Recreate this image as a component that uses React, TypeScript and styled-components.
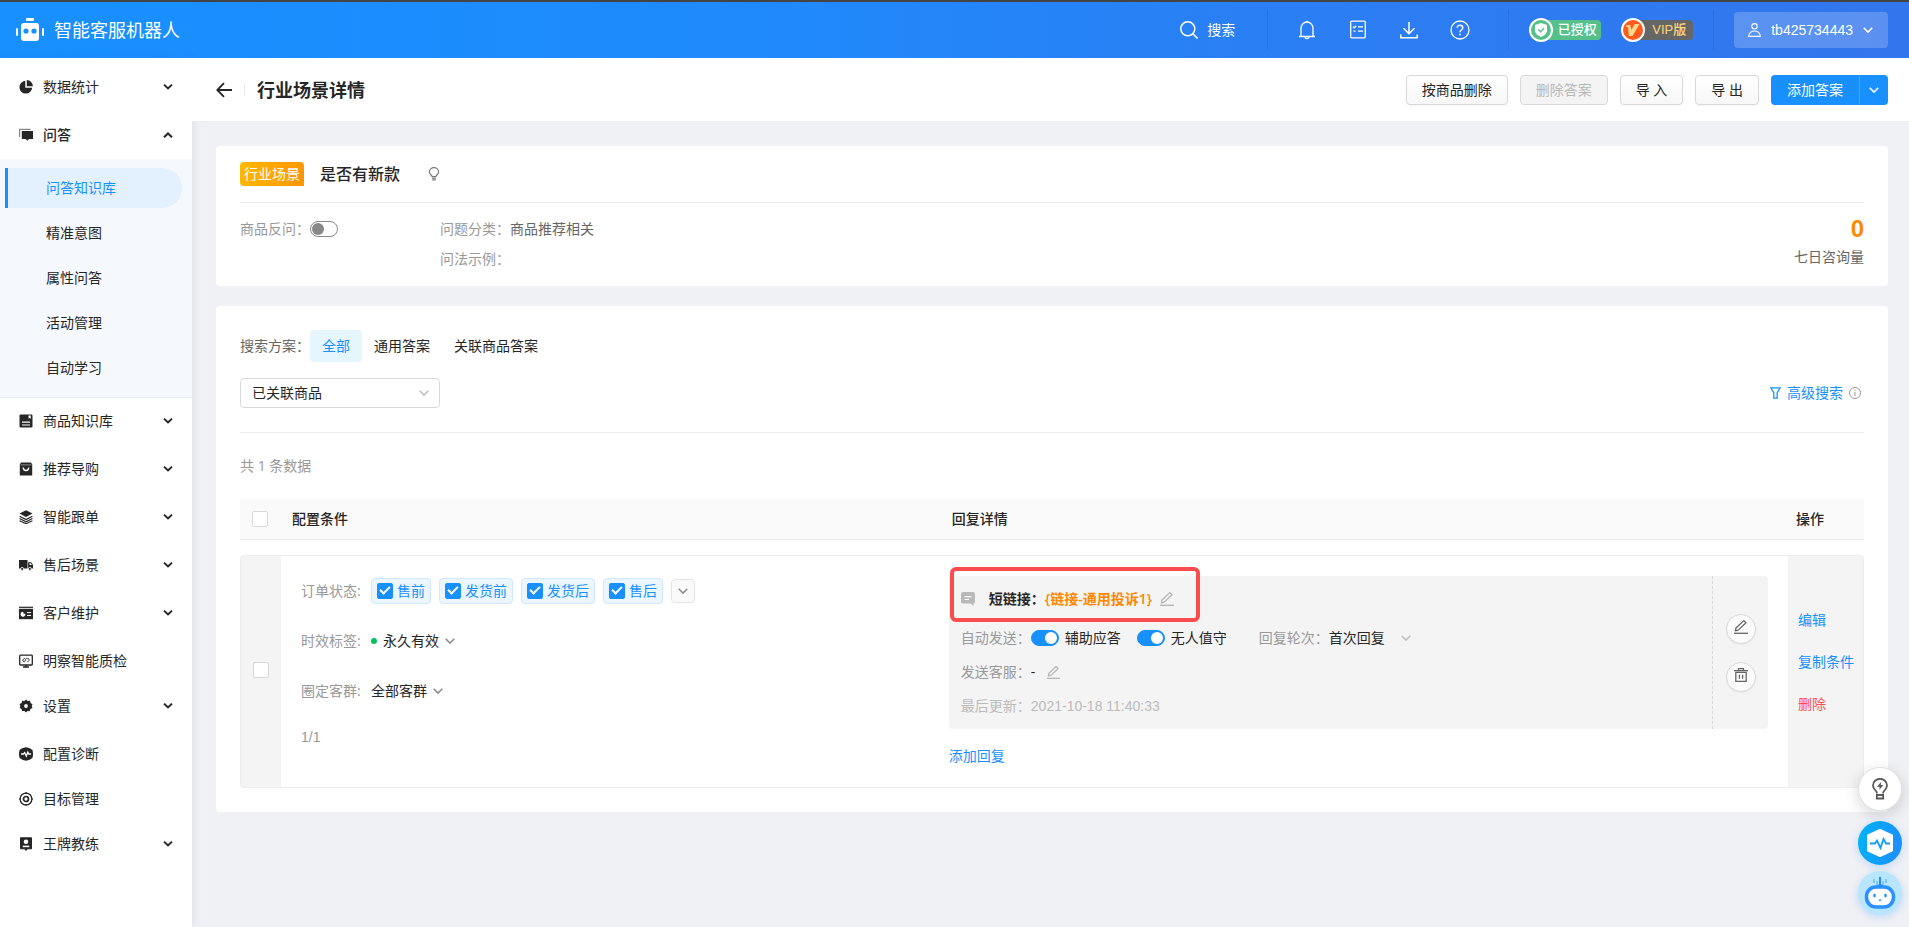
import React from "react";
import styled, { createGlobalStyle, css } from "styled-components";

const blue = "#1890ff";
const ui = '"Open Sans", "Noto Sans CJK SC", sans-serif';
const arial = '"Liberation Sans", "Noto Sans CJK SC", sans-serif';

const Global = createGlobalStyle`
  *, *::before, *::after { box-sizing: border-box; }
  body { margin: 0; background: #f0f1f5; color: #262626; font: 14px/22px ${ui}; }
  button, select, input { font: inherit; color: inherit; margin: 0; }
  button { cursor: pointer; }
  a { text-decoration: none; color: inherit; }
  ul, h1, h2, p { margin: 0; padding: 0; list-style: none; }
  svg { display: block; flex: none; }
`;

/* ---------- shell ---------- */
const Page = styled.div`
  display: flex;
  flex-direction: column;
  min-height: 100vh;
`;
const TopBar = styled.header`
  display: flex;
  align-items: center;
  height: 58px;
  padding: 0 21px 0 16px;
  border-top: 2px solid #444;
  color: #fff;
  background: linear-gradient(90deg, #1890ff 0%, #1f8afc 40%, #2a7ff4 65%, #3375ed 100%);
`;
const Brand = styled.a`
  display: flex;
  align-items: center;
  gap: 10px;
  margin-right: auto;
  font-size: 18px;
`;
const SearchButton = styled.button`
  display: flex;
  align-items: center;
  gap: 9px;
  padding: 0;
  margin-right: 32px;
  border: 0;
  background: none;
`;
const BarLine = styled.span`
  width: 1px;
  height: 40px;
  background: rgba(0, 40, 120, 0.12);
`;
const IconGroup = styled.nav`
  display: flex;
  gap: 31px;
  padding: 0 38px 0 29px;
`;
const BareButton = styled.button`
  display: flex;
  padding: 0;
  border: 0;
  background: none;
`;
const Badges = styled.div`
  display: flex;
  gap: 20px;
  padding: 0 20px;
`;
const Badge = styled.span`
  display: flex;
  align-items: center;
`;
const BadgeDisc = styled.span<{ $bg: string }>`
  position: relative;
  display: flex;
  align-items: center;
  justify-content: center;
  width: 24px;
  height: 24px;
  margin-right: -12px;
  border: 2px solid #fff;
  border-radius: 50%;
  background: ${(p) => p.$bg};
`;
const BadgeText = styled.span<{ $bg: string; $fg: string }>`
  width: 60px;
  height: 20px;
  padding-left: 12px;
  border-radius: 4px;
  text-align: center;
  font-family: ${arial};
  font-size: 13px;
  font-weight: 500;
  line-height: 20px;
  color: ${(p) => p.$fg};
  background: ${(p) => p.$bg};
`;
const UserButton = styled.button`
  display: flex;
  align-items: center;
  height: 36px;
  margin-left: 20px;
  padding: 0 15px 0 14px;
  border: 0;
  border-radius: 4px;
  background: rgba(255, 255, 255, 0.2);
  font-family: ${arial};

  span { margin: 0 10px; }
`;
const Body = styled.div`
  display: flex;
  flex: 1;
`;

/* ---------- side menu ---------- */
const Side = styled.nav`
  flex: none;
  width: 192px;
  padding-top: 9px;
  background: #fff;
  box-shadow: 2px 0 8px rgba(40, 60, 90, 0.08);
`;
const MenuLink = styled.a<{ $strong?: boolean }>`
  display: flex;
  align-items: center;
  gap: 10px;
  height: 40px;
  padding: 0 19px;
  font-weight: ${(p) => (p.$strong ? 500 : 400)};

  svg:nth-of-type(2) { margin-left: auto; }
`;
const MenuItem = styled.li<{ $group?: boolean }>`
  margin-bottom: ${(p) => (p.$group ? 8 : 5)}px;
`;
const SubMenu = styled.ul`
  display: flex;
  flex-direction: column;
  gap: 5px;
  margin: 4px 0 -5px;
  padding: 9px 10px 9px 5px;
  border-bottom: 1px solid #e3eefa;
  background: #f5f9fd;
`;
const SubLink = styled.a<{ $active?: boolean }>`
  display: block;
  padding-left: 38px;
  border-left: 3px solid transparent;
  border-radius: 0 20px 20px 0;
  line-height: 40px;
  ${(p) => p.$active && css`
    color: ${blue};
    border-color: ${blue};
    background: #e3f0fe;
  `}
`;

/* ---------- content ---------- */
const Content = styled.div`
  flex: 1;
  min-width: 0;
`;
const TitleBar = styled.div`
  display: flex;
  align-items: center;
  height: 63px;
  padding: 0 21px 0 24px;
  background: #fff;
`;
const Title = styled.h1`
  margin-left: 12px;
  font-size: 18px;
  font-weight: 600;
`;
const TitleLine = styled.span`
  width: 1px;
  height: 12px;
  margin-left: 12px;
  background: #e8e8e8;
`;
const Actions = styled.div`
  display: flex;
  gap: 12px;
  margin-left: auto;
`;
const Button = styled.button`
  height: 30px;
  padding: 0 15px;
  border: 1px solid #d9d9d9;
  border-radius: 4px;
  background: linear-gradient(#fff, #f7f7f7);
  box-shadow: 0 1px 2px rgba(0, 0, 0, 0.04);
  line-height: 28px;

  &:disabled { color: #b8b8b8; background: #f4f4f4; box-shadow: none; }
`;
const SplitButton = styled.div`
  display: flex;
  overflow: hidden;
  border-radius: 4px;
  color: #fff;
  background: ${blue};

  button {
    height: 30px;
    padding: 0 16px;
    border: 0;
    background: none;
  }
  button + button {
    padding: 0 9px;
    border-left: 1px solid #46a6ff;
  }
`;
const Main = styled.main`
  display: flex;
  flex-direction: column;
  gap: 20px;
  padding: 25px 21px 40px 24px;
`;
const Card = styled.section<{ $pad: string }>`
  padding: ${(p) => p.$pad};
  border-radius: 4px;
  background: #fff;
`;
const SceneHead = styled.div`
  display: flex;
  align-items: center;
  gap: 16px;
  padding-bottom: 16px;
  border-bottom: 1px solid #eee;
`;
const SceneTag = styled.span`
  padding: 0 4px;
  border-radius: 4px 4px 0 4px;
  color: #fff;
  line-height: 24px;
  background: linear-gradient(90deg, #ffb800, #ff9600);
`;
const SceneName = styled.h2`
  margin-right: 12px;
  font-size: 16px;
  font-weight: 500;
  line-height: 24px;
`;
const SceneBody = styled.div`
  display: flex;
`;
const Fields = styled.div<{ $w?: number }>`
  display: flex;
  flex-direction: column;
  gap: 8px;
  padding-top: 15px;
  ${(p) => p.$w && `width: ${p.$w}px;`}
`;
const Field = styled.div`
  display: flex;
  align-items: center;
  color: #666;
`;
const Muted = styled.span`
  color: #999;
`;
const MutedLabel = styled.label`
  color: #999;
`;
const Stat = styled.div`
  display: flex;
  flex-direction: column;
  gap: 3px;
  margin-left: auto;
  padding-top: 12px;
  text-align: right;
  color: #666;

  strong { font-family: ${arial}; font-size: 24px; line-height: 28px; color: #ff8800; }
`;
const Switch = styled.input.attrs({ type: "checkbox", role: "switch" })`
  appearance: none;
  display: flex;
  align-items: center;
  width: 28px;
  height: 16px;
  padding: 0 1px;
  border: 1px solid #888;
  border-radius: 8px;
  background: #fff;

  &::before {
    content: "";
    width: 12px;
    height: 12px;
    border-radius: 50%;
    background: #888;
  }
  &:checked { justify-content: flex-end; border-color: ${blue}; background: ${blue}; }
  &:checked::before { background: #fff; }
`;
const Plan = styled.div`
  display: flex;
  align-items: center;
  color: #666;
`;
const PlanTab = styled.button<{ $active?: boolean }>`
  height: 32px;
  padding: 0 12px;
  border: 0;
  border-radius: 4px;
  color: ${(p) => (p.$active ? blue : "#262626")};
  background: ${(p) => (p.$active ? "#e6f6ff" : "none")};
`;
const FilterRow = styled.div`
  display: flex;
  align-items: center;
  justify-content: space-between;
  padding: 16px 0 24px;
  border-bottom: 1px solid #eee;
`;
const Picker = styled.span`
  position: relative;
  display: inline-flex;
  align-items: center;

  svg { position: absolute; right: 0; pointer-events: none; }
`;
const BoxPicker = styled(Picker)`
  width: 200px;
  svg { right: 11px; }
`;
const BoxSelect = styled.select`
  appearance: none;
  width: 100%;
  height: 30px;
  padding: 0 11px;
  border: 1px solid #d9d9d9;
  border-radius: 4px;
  background: #fff;
`;
const PlainSelect = styled.select<{ $room: number }>`
  appearance: none;
  padding: 0 ${(p) => p.$room}px 0 0;
  border: 0;
  background: none;
`;
const Advanced = styled.div`
  display: flex;
  align-items: center;
  gap: 6px;
  padding-right: 3px;
`;
const Link = styled.a<{ $danger?: boolean }>`
  display: inline-flex;
  align-items: center;
  gap: 6px;
  color: ${(p) => (p.$danger ? "#ff4d4f" : blue)};
`;
const Count = styled.p`
  padding: 22px 0;
  color: #999;
`;

/* ---------- answers table ---------- */
const Table = styled.table`
  width: 100%;
  table-layout: fixed;
  border-spacing: 0;

  th {
    height: 41px;
    padding: 0;
    border-bottom: 1px solid #eee;
    background: #fafafa;
    text-align: left;
    font-weight: 500;
  }
  th:nth-child(1) { padding-left: 12px; }
  th:nth-child(2) { padding-left: 11px; }
  th:nth-child(3) { padding-left: 5px; }
  th:nth-child(4) { padding-left: 8px; }

  tbody::before { content: ""; display: block; height: 15px; }
  td { padding: 0; border: solid #eee; border-width: 1px 0; vertical-align: top; }
`;
const CheckCell = styled.td`
  && {
    padding: 0 0 4px 12px;
    border-left-width: 1px;
    border-radius: 4px 0 0 4px;
    background: #f4f4f4;
    vertical-align: middle;
  }
`;
const ConditionCell = styled.td`
  && { padding: 22px 0 0 20px; }
`;
const ReplyCell = styled.td`
  && { padding: 20px 20px 20px 2px; }
`;
const OpsCell = styled.td`
  && {
    border-right-width: 1px;
    border-radius: 0 4px 4px 0;
    background: #f4f4f4;
    vertical-align: middle;
  }
`;
const Ops = styled.div`
  display: flex;
  flex-direction: column;
  align-items: flex-start;
  gap: 20px;
  padding: 0 0 20px 10px;
`;
const Check = styled.input.attrs({ type: "checkbox" })`
  appearance: none;
  display: flex;
  justify-content: center;
  flex: none;
  width: 16px;
  height: 16px;
  border: 1px solid #d9d9d9;
  border-radius: 2px;
  background: #fff;

  &:checked { border-color: ${blue}; background: ${blue}; }
  &:checked::before {
    content: "";
    width: 6px;
    height: 10px;
    border: solid #fff;
    border-width: 0 2px 2px 0;
    transform: rotate(45deg);
  }
`;
const Condition = styled.div`
  display: flex;
  align-items: center;
  height: 26px;
  margin-bottom: 24px;
`;
const ConditionLabel = styled.label`
  width: 70px;
  color: #999;
`;
const Tags = styled.div`
  display: flex;
  align-items: center;
  gap: 8px;
`;
const StateTag = styled.label`
  display: flex;
  align-items: center;
  gap: 4px;
  height: 26px;
  padding: 0 5px;
  border: 1px solid #d0e8ff;
  border-radius: 4px;
  color: ${blue};
  background: #ebf6ff;
`;
const MoreButton = styled.button`
  display: flex;
  align-items: center;
  justify-content: center;
  width: 24px;
  height: 24px;
  padding: 0;
  border: 1px solid #e4e4e4;
  border-radius: 4px;
  background: #fafafa;
`;
const Dot = styled.span`
  width: 6px;
  height: 6px;
  margin-right: 6px;
  border-radius: 50%;
  background: #07c160;
`;
const PageNo = styled.p`
  font-family: ${arial};
  line-height: 18px;
  color: #999;
`;
const ReplyCard = styled.div`
  position: relative;
  display: flex;
  margin-bottom: 16px;
  border-radius: 4px;
  background: #f4f4f4;
`;
const ReplyMain = styled.div`
  flex: 1;
  padding: 0 12px 6px;
`;
const ReplySide = styled.div`
  display: flex;
  flex-direction: column;
  align-items: center;
  justify-content: center;
  gap: 18px;
  width: 56px;
  border-left: 1px dashed #d9d9d9;
`;
const ReplyRow = styled.div<{ $head?: boolean }>`
  display: flex;
  align-items: center;
  height: ${(p) => (p.$head ? 45 : 34)}px;

  strong { margin: 0 8px 0 14px; font-weight: 600; }
  strong em { font-style: normal; color: #ff8800; }
`;
const SwitchLabel = styled.label`
  display: flex;
  align-items: center;
  gap: 6px;
  margin-right: 16px;
`;
const RoundLabel = styled.label`
  margin-left: 16px;
  color: #999;
`;
const Dash = styled.span`
  margin-right: 12px;
`;
const Updated = styled.span`
  color: #bbb;
  font-family: ${arial};
`;
const Highlight = styled.div`
  position: absolute;
  top: -9px;
  left: 1px;
  width: 250px;
  height: 55px;
  border: 4px solid #f94d4d;
  border-radius: 6px;
  pointer-events: none;
`;
const RoundButton = styled.button`
  display: flex;
  align-items: center;
  justify-content: center;
  width: 30px;
  height: 30px;
  padding: 0 0 3px;
  border: 1px solid #d9d9d9;
  border-radius: 50%;
  background: #fbfbfb;
  box-shadow: 0 1px 2px rgba(0, 0, 0, 0.06);
`;
const Floats = styled.aside`
  position: fixed;
  right: 7px;
  bottom: 12px;
  display: flex;
  flex-direction: column;
  align-items: center;
  gap: 6px;
`;
const FloatButton = styled.button<{ $bg: string; $tip?: boolean }>`
  display: flex;
  align-items: center;
  justify-content: center;
  width: 44px;
  height: 44px;
  margin-bottom: ${(p) => (p.$tip ? 4 : 0)}px;
  padding: 0;
  border: ${(p) => (p.$tip ? "1px solid #e0e0e0" : "0")};
  border-radius: 50%;
  background: ${(p) => p.$bg};
  box-shadow: ${(p) => (p.$tip ? "0 4px 16px rgba(0,0,0,.16)" : "0 2px 8px rgba(24,144,255,.25)")};
`;

/* ---------- icons ---------- */
const Chevron = ({ color = "#8c8c8c", w = 1.5 }: { color?: string; w?: number }) => (
  <svg width="10" height="10" viewBox="0 0 10 10" fill="none" stroke={color} strokeWidth={w}>
    <path d="M.7 2.8 5 7.1l4.3-4.3" />
  </svg>
);
const MenuChevron = ({ up }: { up?: boolean }) => (
  <svg width="10" height="10" viewBox="0 0 10 10" fill="none" stroke="#262626" strokeWidth="2">
    <path d={up ? "M1 7.2 5 3.4l4 3.8" : "M1 2.6l4 3.8 4-3.8"} />
  </svg>
);
const Pen = ({ color = "#b4b4b4", size = 14 }: { color?: string; size?: number }) => (
  <svg width={size} height={size} viewBox="0 0 14 14" fill="none" stroke={color} strokeWidth="1.3" strokeLinejoin="round">
    <path d="M1.4 10.8 2 8l7.800-7.400 2.200 2.100L4.200 10.100Z" />
    <path d="M0 13.300h14" />
  </svg>
);
const HeadIcon = ({ children }: { children: React.ReactNode }) => (
  <svg width="20" height="20" viewBox="0 0 20 20" fill="none" stroke="#fff" strokeWidth="1.3">{children}</svg>
);
const D = "#262626";
const menuIcons: Record<string, React.ReactNode> = {
  pie: (<><path d="M6.3.8a6.4 6.4 0 1 0 6.9 7H6.3Z" fill={D} /><path d="M7.8 0a6.3 6.3 0 0 1 6.1 6.3H7.8Z" fill={D} /></>),
  chat: (<><path d="M.6 9V1.4h11" stroke="#888" strokeWidth="1.2" fill="none" /><path d="M2.8 3h11.2v8H10l-1.7 1.7L6.7 11H2.8Z" fill={D} /></>),
  book: (<><rect x=".5" y=".5" width="13" height="13" rx="1.2" fill={D} /><path d="M3 8.2h8M3 11h8" stroke="#fff" strokeWidth="1.2" /><path d="M9.500 1.500h2.300v3.300l-1.150-.8-1.150.8Z" fill="#fff" /></>),
  bag: (<><path d="M2 .4h10l1.200 2.200v11H.8v-11Z" fill={D} /><path d="M1.500 2.900h11" stroke="#aaa" strokeWidth=".8" /><path d="M4.300 5.500c0 4 5.400 4 5.400 0" stroke="#fff" strokeWidth="1.4" fill="none" /></>),
  layers: (<><path d="M7 .3 13.500 3.600 7 6.900.5 3.600Z" fill={D} /><path d="M.6 6.200 7 9.500l6.400-3.300M.6 8.500 7 11.800l6.400-3.300M.6 10.700 7 13.700l6.400-3" stroke={D} strokeWidth="1.2" fill="none" /></>),
  truck: (<><path d="M0 2h8.500v8.500H0Z" fill={D} /><path d="M9.100 4.200h3L14 7v3.500H9.100Z" fill={D} /><path d="M10.500 5.300h1.300l1 1.700h-2.300Z" fill="#fff" /><circle cx="3.200" cy="10.900" r="1.500" fill={D} stroke="#fff" strokeWidth=".8" /><circle cx="10.900" cy="10.900" r="1.500" fill={D} stroke="#fff" strokeWidth=".8" /></>),
  card: (<><path d="M0 1.300h14" stroke={D} strokeWidth="1.2" /><rect y="2.800" width="14" height="10.400" fill={D} /><path d="M2 8.500a2 2 0 0 1 2-2.300v2h2a2 2 0 0 1-4 .3ZM8 6.600h4M8 9.500h4" stroke="#fff" fill="#fff" strokeWidth="1" /></>),
  monitor: (<><rect x=".7" y="1.2" width="12.6" height="9.8" rx=".8" stroke={D} strokeWidth="1.3" fill="none" /><path d="M4 13h6M7 11v2" stroke={D} strokeWidth="1.5" /><path d="M5.700 4 4 5.800c-.6 2.400 2 2.400 2.200 1C6.400 5 7 4 8.200 4.500M8.300 8.200 10 6.400c.4-1.600-.7-2.300-1.600-1.700" stroke={D} fill="none" /></>),
  gear: (<><path d="M7 .5l1.700 1.600 2.300-.3.600 2.200 1.900 1.300L12.700 7l.8 2-2.100 1.100-.8 2.100-2.200-.2L7 13.500 5.500 12l-2.300.1-.7-2.100L.7 9l.6-2-.7-2 2-1.100.6-2.100 2.200.3Z" fill={D} /><circle cx="7" cy="7" r="1.900" fill="#fff" /></>),
  pulse: (<><path d="M7 .2c3 .5 6 1.900 6.600 3.200.5 2 .5 5.200 0 7.200C13 11.900 9.500 13.500 7 13.800 4.500 13.500 1 11.900.4 10.600-.1 8.600-.1 5.400.4 3.400 1 2.100 4 .7 7 .2Z" fill={D} /><path d="M2 7h2.400l1.300-1.300L7.300 9l1.500-4 1 2H12" stroke="#fff" strokeWidth="1.3" fill="none" /></>),
  target: (<g stroke={D} fill="none"><circle cx="7" cy="7" r="5.900" strokeWidth="1.3" /><circle cx="7" cy="7" r="2.500" strokeWidth="1.7" /><path d="M7 0v2M7 12v2M0 7h2M12 7h2" strokeWidth="1.2" /></g>),
  coach: (<><path d="M1.500.8h11v11H8.400L7 13.500 5.600 11.800H1.500Z" fill={D} stroke={D} strokeLinejoin="round" /><circle cx="7" cy="4.800" r="2.300" fill="#fff" /><path d="M3.700 9.400h6.600" stroke="#fff" strokeWidth="1.5" /></>),
};
const MenuIcon = ({ name }: { name: string }) => (
  <svg width="14" height="14" viewBox="0 0 14 14">{menuIcons[name]}</svg>
);

/* ---------- data ---------- */
type Entry = { icon: string; label: string; group?: boolean; children?: string[] };
const menu: Entry[] = [
  { icon: "pie", label: "数据统计", group: true },
  { icon: "chat", label: "问答", group: true, children: ["问答知识库", "精准意图", "属性问答", "活动管理", "自动学习"] },
  { icon: "book", label: "商品知识库", group: true },
  { icon: "bag", label: "推荐导购", group: true },
  { icon: "layers", label: "智能跟单", group: true },
  { icon: "truck", label: "售后场景", group: true },
  { icon: "card", label: "客户维护", group: true },
  { icon: "monitor", label: "明察智能质检" },
  { icon: "gear", label: "设置", group: true },
  { icon: "pulse", label: "配置诊断" },
  { icon: "target", label: "目标管理" },
  { icon: "coach", label: "王牌教练", group: true },
];

const Header = () => (
  <TopBar>
    <Brand href="#">
      <svg width="28" height="24" viewBox="0 0 28 24">
        <g fill="#fff">
          <rect x="10" width="8" height="3" rx="1" />
          <rect x="5" y="5" width="18" height="18" rx="3" />
          <rect y="10" width="2" height="8" rx="1" />
          <rect x="26" y="10" width="2" height="8" rx="1" />
        </g>
        <circle cx="10" cy="13" r="2.600" fill={blue} />
        <circle cx="18" cy="13" r="2.600" fill={blue} />
      </svg>
      智能客服机器人
    </Brand>
    <SearchButton>
      <svg width="18" height="18" viewBox="0 0 18 18" fill="none" stroke="#fff" strokeWidth="1.5">
        <circle cx="7.800" cy="7.800" r="7" /><path d="m12.800 12.800 4.800 4.700" />
      </svg>
      搜索
    </SearchButton>
    <BarLine />
    <IconGroup>
      <BareButton aria-label="通知">
        <HeadIcon><path d="M2 16.500h16M4 16.500V8.500a6 6.500 0 0 1 12 0v8M8 16.800a2 1.800 0 0 0 4 0M10 .8V2" /></HeadIcon>
      </BareButton>
      <BareButton aria-label="任务">
        <HeadIcon><rect x="2.700" y="1.200" width="14.600" height="16.600" rx="1" /><path d="m5 6.700 1.200 1.200 2-2.200M10 6.800h5M5.500 11.200h2M10 11.200h5" /></HeadIcon>
      </BareButton>
      <BareButton aria-label="下载">
        <HeadIcon><path d="M10 2v11.500M4.500 8.200l5.500 5.500 5.500-5.500M1.800 14.500v3.200h16.400v-3.200" strokeWidth="1.5" /></HeadIcon>
      </BareButton>
      <BareButton aria-label="帮助">
        <HeadIcon><circle cx="10" cy="10" r="9" /><path d="M7.200 7.800c0-3.600 5.600-3.500 5.600 0 0 2-2.800 2-2.800 4.400M10 13.700v1.500" strokeWidth="1.5" /></HeadIcon>
      </BareButton>
    </IconGroup>
    <BarLine />
    <Badges>
      <Badge>
        <BadgeDisc $bg="#55c08a">
          <svg width="12" height="14" viewBox="0 0 12 14"><path d="M6 0l6 2v5.500c0 3-3 5.200-6 6.500-3-1.300-6-3.500-6-6.500V2Z" fill="#fff" /><path d="m3.300 6.500 2.200 2.200 3.500-3.500" stroke="#55c08a" strokeWidth="1.5" fill="none" /></svg>
        </BadgeDisc>
        <BadgeText $bg="#55c08a" $fg="#fff">已授权</BadgeText>
      </Badge>
      <Badge>
        <BadgeDisc $bg="#ff5a1f">
          <svg width="14" height="12" viewBox="0 0 14 12"><path d="M.5 1h4.300L3.900 3H5l.4 3L8.700 0H13.500L6.500 12H2.800L2 3H0Z" fill="#ffd98a" /></svg>
        </BadgeDisc>
        <BadgeText $bg="#666" $fg="#ffd67a">VIP版</BadgeText>
      </Badge>
    </Badges>
    <BarLine />
    <UserButton>
      <svg width="13" height="14" viewBox="0 0 13 14" fill="none" stroke="#fff" strokeWidth="1.1"><circle cx="6.500" cy="3.300" r="2.700" /><path d="M.7 13.400c0-7.200 11.600-7.200 11.600 0Z" /></svg>
      <span>tb425734443</span>
      <Chevron color="#fff" />
    </UserButton>
  </TopBar>
);

const Sidebar = () => (
  <Side>
    <ul>
      {menu.map((m) => (
        <MenuItem key={m.label} $group={m.group}>
          <MenuLink href="#" $strong={!!m.children}>
            <MenuIcon name={m.icon} />
            {m.label}
            {m.group && <MenuChevron up={!!m.children} />}
          </MenuLink>
          {m.children && (
            <SubMenu>
              {m.children.map((c, i) => (
                <li key={c}><SubLink href="#" $active={i === 0}>{c}</SubLink></li>
              ))}
            </SubMenu>
          )}
        </MenuItem>
      ))}
    </ul>
  </Side>
);

const AnswerTable = () => (
  <Table>
    <colgroup>
      <col style={{ width: 41 }} />
      <col style={{ width: "41%" }} />
      <col />
      <col style={{ width: 76 }} />
    </colgroup>
    <thead>
      <tr>
        <th><Check aria-label="全选" /></th>
        <th>配置条件</th>
        <th>回复详情</th>
        <th>操作</th>
      </tr>
    </thead>
    <tbody>
      <tr>
        <CheckCell><Check aria-label="选择此行" /></CheckCell>
        <ConditionCell>
          <Condition>
            <ConditionLabel as="span">订单状态:</ConditionLabel>
            <Tags>
              {["售前", "发货前", "发货后", "售后"].map((t) => (
                <StateTag key={t}><Check defaultChecked />{t}</StateTag>
              ))}
              <MoreButton aria-label="更多"><Chevron /></MoreButton>
            </Tags>
          </Condition>
          <Condition>
            <ConditionLabel htmlFor="validity">时效标签:</ConditionLabel>
            <Dot />
            <Picker><PlainSelect id="validity" $room={16}><option>永久有效</option></PlainSelect><Chevron /></Picker>
          </Condition>
          <Condition>
            <ConditionLabel htmlFor="crowd">圈定客群:</ConditionLabel>
            <Picker><PlainSelect id="crowd" $room={16}><option>全部客群</option></PlainSelect><Chevron /></Picker>
          </Condition>
          <PageNo>1/1</PageNo>
        </ConditionCell>
        <ReplyCell>
          <ReplyCard>
            <ReplyMain>
              <ReplyRow $head>
                <svg width="14" height="14" viewBox="0 0 14 14"><path d="M2 0h10a2 2 0 0 1 2 2v7.500a2 2 0 0 1-1.500 2V14l-3-2.500H2a2 2 0 0 1-2-2V2a2 2 0 0 1 2-2Z" fill="#b8b8b8" /><path d="M3.500 4.700h7M3.500 7.500h4.500" stroke="#fff" strokeWidth="1.2" /></svg>
                <strong>短链接：<em>{"{链接-通用投诉1}"}</em></strong>
                <BareButton aria-label="编辑短链接"><Pen /></BareButton>
              </ReplyRow>
              <ReplyRow>
                <Muted>自动发送：</Muted>
                <SwitchLabel><Switch defaultChecked />辅助应答</SwitchLabel>
                <SwitchLabel><Switch defaultChecked />无人值守</SwitchLabel>
                <RoundLabel htmlFor="round">回复轮次：</RoundLabel>
                <Picker><PlainSelect id="round" $room={26}><option>首次回复</option></PlainSelect><Chevron color="#bfbfbf" /></Picker>
              </ReplyRow>
              <ReplyRow>
                <Muted>发送客服：</Muted>
                <Dash>-</Dash>
                <BareButton aria-label="编辑发送客服"><Pen size={13} /></BareButton>
              </ReplyRow>
              <ReplyRow><Updated>最后更新：2021-10-18 11:40:33</Updated></ReplyRow>
            </ReplyMain>
            <ReplySide>
              <RoundButton aria-label="编辑回复"><Pen color="#666" size={14} /></RoundButton>
              <RoundButton aria-label="删除回复">
                <svg width="14" height="14" viewBox="0 0 14 14" fill="none" stroke="#666" strokeWidth="1.3"><path d="M0 2.700h14M4.500 2.500V.7h5v1.800M1.800 4.300h10.400v9H1.800ZM5.400 6.700v4M8.600 6.700v4" /></svg>
              </RoundButton>
            </ReplySide>
            <Highlight />
          </ReplyCard>
          <Link href="#">添加回复</Link>
        </ReplyCell>
        <OpsCell>
          <Ops>
            <Link href="#">编辑</Link>
            <Link href="#">复制条件</Link>
            <Link href="#" $danger>删除</Link>
          </Ops>
        </OpsCell>
      </tr>
    </tbody>
  </Table>
);

export default function App() {
  return (
    <Page>
      <Global />
      <Header />
      <Body>
        <Sidebar />
        <Content>
          <TitleBar>
            <BareButton aria-label="返回">
              <svg width="16" height="16" viewBox="0 0 16 16" fill="none" stroke={D} strokeWidth="1.8"><path d="M16 8H1.500M8 1.200 1.300 8 8 14.800" /></svg>
            </BareButton>
            <TitleLine />
            <Title>行业场景详情</Title>
            <Actions>
              <Button>按商品删除</Button>
              <Button disabled>删除答案</Button>
              <Button>导 入</Button>
              <Button>导 出</Button>
              <SplitButton>
                <button>添加答案</button>
                <button aria-label="更多添加方式"><Chevron color="#fff" /></button>
              </SplitButton>
            </Actions>
          </TitleBar>
          <Main>
            <Card $pad="16px 24px">
              <SceneHead>
                <SceneTag>行业场景</SceneTag>
                <SceneName>是否有新款</SceneName>
                <svg width="12" height="14" viewBox="0 0 12 14" fill="none" stroke="#777" strokeWidth="1.200"><path d="M4 9.500C3.800 8 1.400 7.200 1.400 4.900a4.600 4.300 0 0 1 9.200 0C10.600 7.200 8.200 8 8 9.500ZM4 11.200h4M4.300 12.800h3.400" /></svg>
              </SceneHead>
              <SceneBody>
                <Fields $w={200}>
                  <Field>
                    <MutedLabel htmlFor="ask">商品反问：</MutedLabel>
                    <Switch id="ask" />
                  </Field>
                </Fields>
                <Fields>
                  <Field><Muted>问题分类：</Muted>商品推荐相关</Field>
                  <Field><Muted>问法示例：</Muted></Field>
                </Fields>
                <Stat><strong>0</strong><span>七日咨询量</span></Stat>
              </SceneBody>
            </Card>
            <Card $pad="24px">
              <Plan>
                搜索方案：
                <PlanTab $active>全部</PlanTab>
                <PlanTab>通用答案</PlanTab>
                <PlanTab>关联商品答案</PlanTab>
              </Plan>
              <FilterRow>
                <BoxPicker>
                  <BoxSelect aria-label="商品关联"><option>已关联商品</option></BoxSelect>
                  <Chevron color="#bfbfbf" />
                </BoxPicker>
                <Advanced>
                  <Link href="#">
                    <svg width="11" height="12" viewBox="0 0 11 12" fill="none" stroke={blue} strokeWidth="1.3"><path d="M.8.900h9.400L7.200 5.600v5.500H3.800V5.600Z" /></svg>
                    高级搜索
                  </Link>
                  <svg width="12" height="12" viewBox="0 0 12 12" fill="none" stroke="#999"><circle cx="6" cy="6" r="5.500" /><path d="M6 5v4M6 2.800v1.200" /></svg>
                </Advanced>
              </FilterRow>
              <Count>共 1 条数据</Count>
              <AnswerTable />
            </Card>
          </Main>
        </Content>
      </Body>
      <Floats>
        <FloatButton $bg="#fff" $tip aria-label="提示">
          <svg width="16" height="22" viewBox="0 0 16 22" fill="none" stroke="#595959" strokeWidth="1.8"><path d="M5 15c-.2-2.500-4-3.500-4-7.500a7 6.700 0 0 1 14 0c0 4-3.800 5-4 7.500M4.800 15.500v5h6.400v-5M5 17h6" /><path d="M9 4 5 8.700h2.500v3l3.800-4.600H8.800Z" fill="#595959" stroke="none" /></svg>
        </FloatButton>
        <FloatButton $bg="linear-gradient(100deg, #00b4f5, #1f8bff)" aria-label="诊断">
          <svg width="28" height="28" viewBox="0 0 28 28"><path d="M14 1l12 5.500v15L14 27 2 21.500v-15Z" fill="#fff" stroke="#fff" strokeWidth="2" strokeLinejoin="round" /><path d="M4 14.500h5l2-3 3.500 7.500 3-9 2.500 4.500h4" stroke="#10a0fa" strokeWidth="1.8" fill="none" /></svg>
        </FloatButton>
        <FloatButton $bg="#b8e5ff" aria-label="机器人助手">
          <svg width="32" height="32" viewBox="0 0 32 32"><path d="M10 2v4M13 4v3M19 4v3M22 2v4" stroke="#4aa8f5" strokeWidth="1" /><path d="M16 0v8M12.500 8.500h7" stroke={blue} strokeWidth="2" /><rect x="2.500" y="10" width="27" height="20" rx="9.500" fill="#fff" stroke="#2a90ff" strokeWidth="3.500" /><ellipse cx="10.500" cy="18.500" rx="1.200" ry="1.900" fill={blue} /><ellipse cx="21.500" cy="18.500" rx="1.200" ry="1.900" fill={blue} /><path d="M14.200 22.500h3.600l-1.800 2Z" fill={blue} /></svg>
        </FloatButton>
      </Floats>
    </Page>
  );
}
